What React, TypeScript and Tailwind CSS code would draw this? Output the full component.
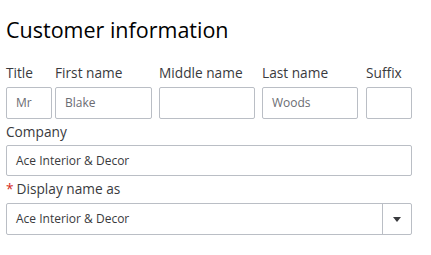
import React from 'react';

const font = { fontFamily: '"Open Sans", "Noto Sans", sans-serif' };

function Field({ label, value, width }: { label: string; value?: string; width: string }) {
  return (
    <div className={`flex flex-col ${width}`}>
      <label className="text-[13.7px] leading-[18px] text-[#393a3d] whitespace-nowrap mb-[5px]">{label}</label>
      <div className="h-[32px] border border-[#babec5] rounded-[2px] bg-white px-[9px] flex items-center text-[12px] text-[#6b6c72]">
        {value}
      </div>
    </div>
  );
}

export default function App() {
  return (
    <div className="w-[431px] h-[255px] bg-white pl-[6px] pt-[16px]" style={font}>
      <h2 className="text-[21.5px] leading-[28px] text-black">Customer information</h2>

      {/* name row */}
      <div className="flex mt-[20px]">
        <Field label="Title" value="Mr" width="w-[46px]" />
        <div className="w-[3px]" />
        <Field label="First name" value="Blake" width="w-[97px]" />
        <div className="w-[7px]" />
        <Field label="Middle name" width="w-[96px]" />
        <div className="w-[7px]" />
        <Field label="Last name" value="Woods" width="w-[96px]" />
        <div className="w-[8px]" />
        <Field label="Suffix" width="w-[46px]" />
      </div>

      <div className="w-[406px] mt-[4px]">
        <label className="block text-[13.7px] leading-[18px] text-[#393a3d] mb-[4px]">Company</label>
        <div className="h-[31px] border border-[#babec5] rounded-[2px] px-[9px] flex items-center text-[12px] text-[#393a3d]">
          Ace Interior &amp; Decor
        </div>

        <label className="flex items-center text-[13.7px] leading-[18px] text-[#393a3d] mt-[4px] mb-[5px]">
          <span className="text-[#d52b1e] mr-[3px]">*</span>Display name as
        </label>
        <div className="h-[32px] border border-[#babec5] rounded-[2px] flex text-[12px] text-[#393a3d]">
          <div className="flex-1 px-[9px] flex items-center">Ace Interior &amp; Decor</div>
          <div className="w-[29px] border-l border-[#babec5] flex items-center justify-center">
            <svg width="8" height="5" viewBox="0 0 8 5">
              <path d="M0 0h8L4 5z" fill="#393a3d" />
            </svg>
          </div>
        </div>
      </div>
    </div>
  );
}
